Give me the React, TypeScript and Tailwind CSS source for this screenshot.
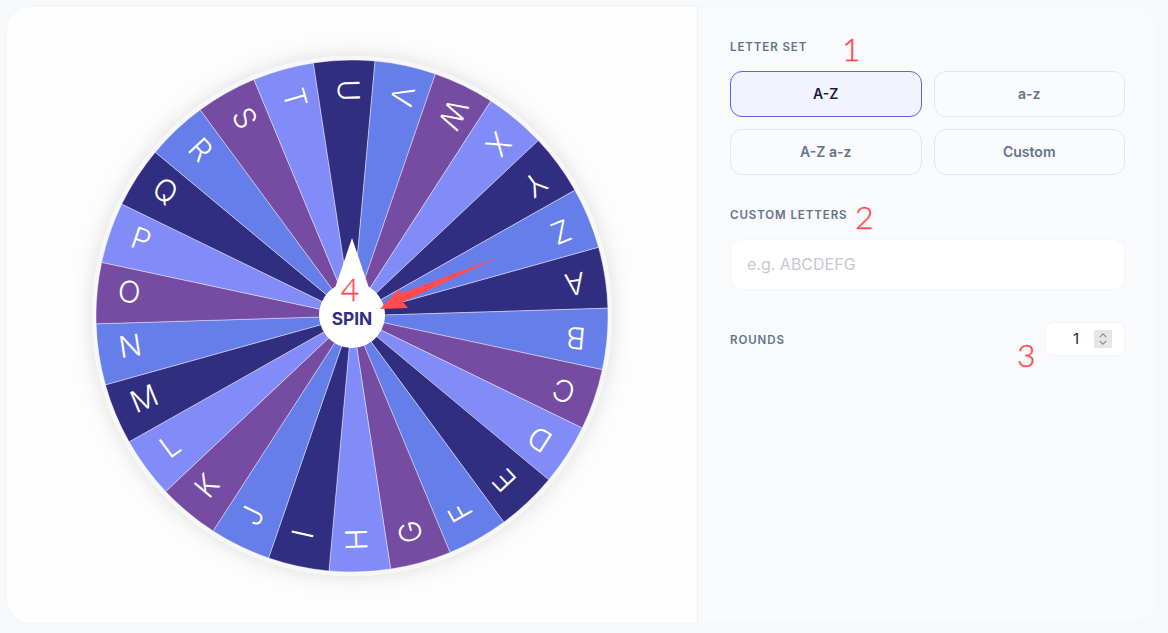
const LETTERS = "ABCDEFGHIJKLMNOPQRSTUVWXYZ".split("");
const COLORS = ["#312e81", "#667eea", "#764ba2", "#818cf8"];
const CX = 352;
const CY = 316;
const R = 256;
const START = -15.6;

function polar(r: number, deg: number) {
  const a = (deg * Math.PI) / 180;
  return [CX + r * Math.cos(a), CY + r * Math.sin(a)];
}

function Wheel() {
  const step = 360 / LETTERS.length;
  return (
    <svg viewBox="0 0 690 616" className="w-[690px] h-[616px]">
      <defs>
        <filter id="wheel-shadow" x="-20%" y="-20%" width="140%" height="140%">
          <feDropShadow dx="0" dy="0" stdDeviation="10" floodColor="#000" floodOpacity="0.13" />
        </filter>
      </defs>
      <g transform="translate(-7 -7)">
        <circle cx={CX} cy={CY} r={R + 4} fill="#f7f7f9" filter="url(#wheel-shadow)" />
        {LETTERS.map((l, i) => {
          const a0 = START + i * step;
          const a1 = a0 + step;
          const mid = a0 + step / 2;
          const [x0, y0] = polar(R, a0);
          const [x1, y1] = polar(R, a1);
          const [px, py] = polar(R - 31.5, mid + 0.8);
          const tx = px + 0.5;
          const ty = py - 1;
          return (
            <g key={l}>
              <path
                d={`M${CX} ${CY}L${x0} ${y0}A${R} ${R} 0 0 1 ${x1} ${y1}Z`}
                fill={COLORS[i % 4]}
                stroke="#ffffff"
                strokeOpacity="0.4"
                strokeWidth="1"
              />
              <text
                x={tx}
                y={ty}
                transform={`rotate(${mid + 180} ${tx} ${ty})`}
                textAnchor="middle"
                dominantBaseline="central"
                fill="#ffffff"
                fontFamily="Inter, sans-serif"
                fontSize="30"
                fontWeight="350"
              >
                {l}
              </text>
            </g>
          );
        })}
        <path d="M352 238L368.5 286.5A33 33 0 1 1 335.5 286.5Z" fill="#ffffff" />
        <text
          x={CX}
          y={318}
          textAnchor="middle"
          dominantBaseline="central"
          fill="#312e81"
          fontFamily="Inter, sans-serif"
          fontSize="17.3"
          fontWeight="700"
        >
          SPIN
        </text>
        <text
          x={350}
          y={301}
          textAnchor="middle"
          fill="#ff4d4f"
          stroke="#ff4d4f"
          strokeWidth="0.4"
          fontFamily="Lato, sans-serif"
          fontSize="32"
          fontWeight="300"
        >
          4
        </text>
        <path d="M499 257L402 293L399 289L380 309L408 308L403 302Z" fill="#ff4d4f" />
      </g>
    </svg>
  );
}

function OptionButton({ label, active }: { label: string; active?: boolean }) {
  return (
    <button
      className={
        active
          ? "h-[46px] pb-px rounded-xl border border-[#5b62ea] bg-[#f1f4fd] text-[14px] font-semibold text-[#1e1b3a]"
          : "h-[46px] pb-px rounded-xl border border-[#e3e6f2] bg-[#fafbfd] text-[14px] font-semibold text-[#64748b]"
      }
    >
      {label}
    </button>
  );
}

function Mark({ children, className }: { children: string; className: string }) {
  return (
    <span className={"absolute text-[32px] font-light leading-none text-[#ff4d4f] [-webkit-text-stroke:0.4px_#ff4d4f] font-['Lato',sans-serif] " + className}>
      {children}
    </span>
  );
}

export default function App() {
  return (
    <div className="w-[1168px] h-[633px] bg-[#f8f9fb] p-[7px] pb-[10px] pr-[11px] font-['Inter',sans-serif] overflow-hidden">
      <div className="flex h-[616px] rounded-[24px] bg-white overflow-hidden shadow-[0_0_4px_rgba(0,0,0,0.03)]">
        <div className="w-[690px] shrink-0 bg-[#fdfdfe]">
          <Wheel />
        </div>
        <div className="relative flex-1 bg-[#f8fafc] border-l border-[#f0f1f5] pl-[32px] pr-[32px] pt-[33px]">
          <div className="text-[11.5px] leading-[14px] font-semibold tracking-[0.08em] text-[#64748b]">LETTER SET</div>
          <Mark className="left-[144px] top-[26px]">1</Mark>
          <div className="grid grid-cols-2 gap-x-3 gap-y-3 mt-[17px]">
            <OptionButton label="A-Z" active />
            <OptionButton label="a-z" />
            <OptionButton label="A-Z a-z" />
            <OptionButton label="Custom" />
          </div>
          <div className="mt-[33px] text-[11.5px] leading-[14px] font-semibold tracking-[0.08em] text-[#64748b]">CUSTOM LETTERS</div>
          <Mark className="left-[157px] top-[194px]">2</Mark>
          <input
            placeholder="e.g. ABCDEFG"
            className="mt-[17px] block w-full h-[51px] pb-[2px] rounded-xl bg-white border border-[#f5f6fa] px-4 text-[16px] outline-none placeholder:text-[#c8c8d0]"
          />
          <div className="mt-[32px] flex items-center justify-between h-[34px]">
            <span className="mt-[3px] text-[11.5px] font-semibold tracking-[0.08em] text-[#64748b]">ROUNDS</span>
            <div className="flex items-center justify-end w-[80px] h-[34px] rounded-lg bg-white border border-[#f3f4f8] pr-[12px]">
              <span className="mt-px text-[15px] text-[#1e1b3a] mr-[15px]">1</span>
              <span className="flex flex-col items-center justify-center w-[18px] h-[18px] bg-[#e6e6ea]">
                <svg viewBox="0 0 10 6" className="w-[8px] h-[5px] mb-[2px]" fill="none" stroke="#8a8a92" strokeWidth="1.5">
                  <path d="M1 5L5 1L9 5" />
                </svg>
                <svg viewBox="0 0 10 6" className="w-[8px] h-[5px]" fill="none" stroke="#8a8a92" strokeWidth="1.5">
                  <path d="M1 1L5 5L9 1" />
                </svg>
              </span>
            </div>
          </div>
          <Mark className="left-[319px] top-[332px]">3</Mark>
        </div>
      </div>
    </div>
  );
}
